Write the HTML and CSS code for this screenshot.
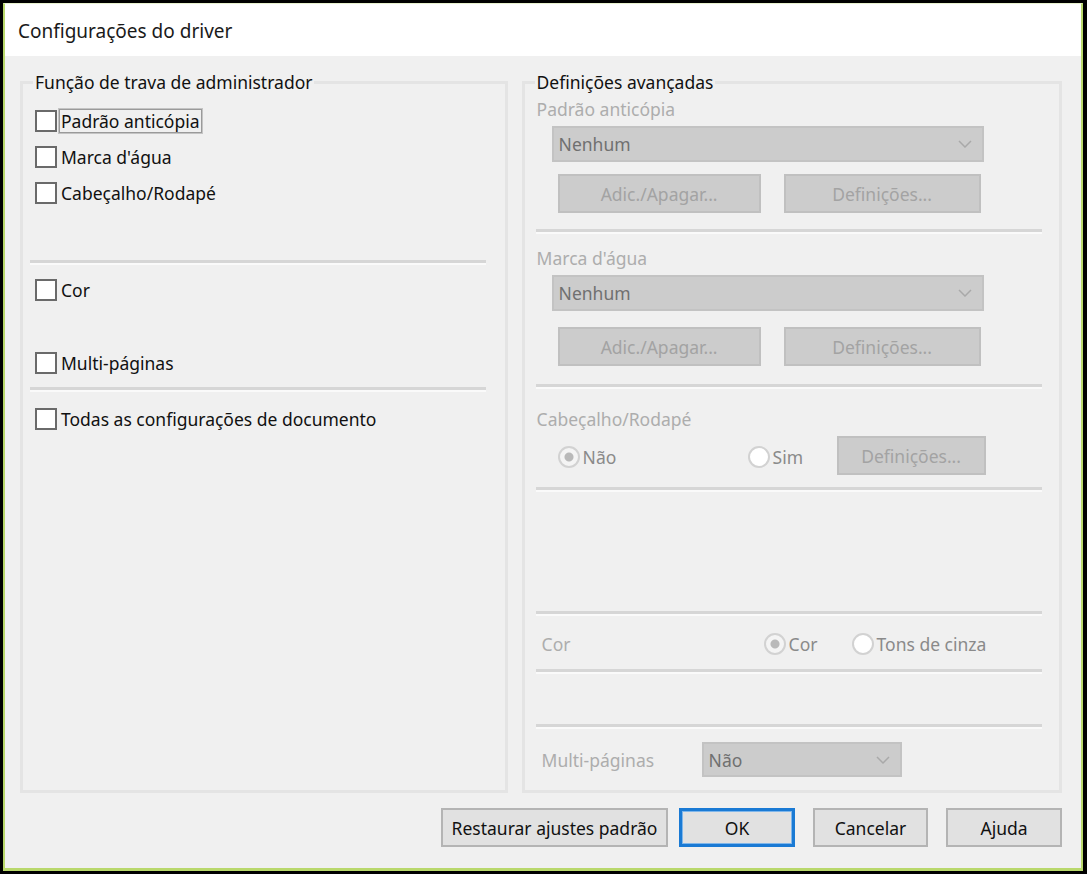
FILE: index.html
```html
<!DOCTYPE html>
<html lang="pt">
<head>
    <meta charset="UTF-8" />
    <title>Configurações do driver</title>
    <link rel="stylesheet" href="styles.css">
</head>
<body>
<div class="frame">
<div class="dialog">
    <div class="titlebar">Configurações do driver</div>

    <div class="dialog-body">
        <div class="groups">

            <!-- Left group: lock function -->
            <fieldset class="group group-lock">
                <legend>Função de trava de administrador</legend>

                <label class="check-row first"><input type="checkbox"><span class="focused">Padrão anticópia</span></label>
                <label class="check-row"><input type="checkbox"><span>Marca d'água</span></label>
                <label class="check-row"><input type="checkbox"><span>Cabeçalho/Rodapé</span></label>

                <div class="separator sep-1"></div>

                <label class="check-row row-cor"><input type="checkbox"><span>Cor</span></label>
                <label class="check-row row-multi"><input type="checkbox"><span>Multi-páginas</span></label>

                <div class="separator sep-2"></div>

                <label class="check-row row-all"><input type="checkbox"><span>Todas as configurações de documento</span></label>
            </fieldset>

            <!-- Right group: advanced settings (all disabled) -->
            <fieldset class="group group-advanced">
                <legend>Definições avançadas</legend>

                <div class="section-label label-a">Padrão anticópia</div>
                <div class="combo combo-wide combo-a">
                    <span>Nenhum</span>
                    <svg width="14" height="8" viewBox="0 0 14 8"><polyline points="1,1 7,7 13,1" fill="none" stroke="#a9a9a9" stroke-width="1.5"/></svg>
                </div>
                <div class="button-pair pair-a">
                    <button class="btn-disabled btn-add" disabled>Adic./Apagar...</button>
                    <button class="btn-disabled btn-settings" disabled>Definições...</button>
                </div>
                <div class="separator sep-a"></div>

                <div class="section-label label-b">Marca d'água</div>
                <div class="combo combo-wide combo-b">
                    <span>Nenhum</span>
                    <svg width="14" height="8" viewBox="0 0 14 8"><polyline points="1,1 7,7 13,1" fill="none" stroke="#a9a9a9" stroke-width="1.5"/></svg>
                </div>
                <div class="button-pair pair-b">
                    <button class="btn-disabled btn-add" disabled>Adic./Apagar...</button>
                    <button class="btn-disabled btn-settings" disabled>Definições...</button>
                </div>
                <div class="separator sep-b"></div>

                <div class="section-label label-c">Cabeçalho/Rodapé</div>
                <div class="radio-row row-header">
                    <label class="radio radio-nao"><input type="radio" name="header" checked disabled><span>Não</span></label>
                    <label class="radio radio-sim"><input type="radio" name="header" disabled><span>Sim</span></label>
                    <button class="btn-disabled btn-header" disabled>Definições...</button>
                </div>
                <div class="separator sep-c"></div>
                <div class="separator sep-d"></div>

                <div class="radio-row row-color">
                    <span class="inline-label">Cor</span>
                    <label class="radio radio-cor"><input type="radio" name="color" checked disabled><span>Cor</span></label>
                    <label class="radio radio-gray"><input type="radio" name="color" disabled><span>Tons de cinza</span></label>
                </div>
                <div class="separator sep-e"></div>
                <div class="separator sep-f"></div>

                <div class="radio-row row-pages">
                    <span class="inline-label">Multi-páginas</span>
                    <div class="combo combo-small">
                        <span>Não</span>
                        <svg width="14" height="8" viewBox="0 0 14 8"><polyline points="1,1 7,7 13,1" fill="none" stroke="#a9a9a9" stroke-width="1.5"/></svg>
                    </div>
                </div>
            </fieldset>
        </div>

        <div class="actions">
            <button class="btn btn-restore">Restaurar ajustes padrão</button>
            <button class="btn btn-ok">OK</button>
            <button class="btn btn-cancel">Cancelar</button>
            <button class="btn btn-help">Ajuda</button>
        </div>
    </div>
</div>
</div>
</body>
</html>
```

FILE: styles.css
```css
body {
    margin: 0;
    background-color: #000;
    font-family: 'Noto Sans', 'Open Sans', sans-serif;
    font-size: 17.5px;
    color: #111;
}

.frame {
    width: 1087px;
    height: 874px;
    box-sizing: border-box;
    padding: 3px 4px 3px 3px;
}

.dialog {
    height: 100%;
    box-sizing: border-box;
    border: 2px solid #b9d86c;
    border-top: 1px solid #e8f2cf;
    border-bottom-width: 3px;
    display: flex;
    flex-direction: column;
}

.titlebar {
    height: 52px;
    line-height: 54px;
    padding-left: 13px;
    background-color: #fff;
    color: #1a1a1a;
    font-size: 19px;
}

.dialog-body {
    flex: 1;
    background-color: #f0f0f0;
    padding: 15px 19px 0 15px;
}

.groups {
    display: flex;
    gap: 14px;
    height: 722px;
}

/* group boxes */
.group {
    box-sizing: border-box;
    margin: 0;
    min-width: 0;
    height: 100%;
    border: 3px solid #e4e4e4;
    padding: 0;
}

.group legend {
    line-height: 22px;
    padding: 0 2px;
    margin-left: 10px;
    color: #111;
}

.group-lock {
    width: 489px;
    padding-top: 10px;
}

.group-advanced {
    width: 542px;
}

/* checkbox rows */
.check-row {
    display: flex;
    align-items: center;
    height: 36px;
    padding-left: 12px;
}

.check-row input {
    appearance: none;
    margin: 0 2px 0 0;
    width: 22px;
    height: 22px;
    box-sizing: border-box;
    border: 2px solid #6a6a6a;
    background-color: #fff;
}

.check-row span {
    padding: 0 1px;
    line-height: 22px;
    border: 1px solid transparent;
}

.check-row span.focused {
    border: 1px solid #9a9a9a;
    outline: 1px solid #c4c4c4;
}

.sep-1 { margin: 49px 19px 0 7px; }
.row-cor { margin-top: 7px; }
.row-multi { margin-top: 37px; }
.sep-2 { margin: 6px 19px 0 7px; }
.row-all { margin-top: 9px; }

/* separators */
.separator {
    height: 3px;
    background-color: #d6d6d6;
    border-bottom: 2px solid #fafafa;
}

.group-advanced .separator {
    margin-left: 11px;
    margin-right: 17px;
}

/* disabled controls */
.section-label,
.inline-label {
    color: #adadad;
    line-height: 22px;
}

.section-label {
    margin-left: 12px;
}

.combo {
    box-sizing: border-box;
    height: 36px;
    background-color: #cccccc;
    border: 2px solid #c3c3c3;
    display: flex;
    align-items: center;
    justify-content: space-between;
    padding: 0 10px 0 5px;
    color: #707070;
}

.combo-wide {
    width: 432px;
    margin-left: 27px;
}

.button-pair {
    display: flex;
    gap: 23px;
    margin-left: 33px;
}

button {
    font-family: inherit;
    font-size: 17.5px;
    box-sizing: border-box;
    padding: 0;
}

.btn-disabled {
    height: 39px;
    background-color: #cccccc;
    border: 2px solid #c0c0c0;
    color: #a3a3a3;
}

.btn-add { width: 203px; }
.btn-settings { width: 197px; }
.btn-header { width: 149px; }

.label-a { margin-top: 5px; }
.combo-a { margin-top: 6px; }
.pair-a { margin-top: 12px; }
.sep-a { margin-top: 16px; }
.label-b { margin-top: 13px; }
.combo-b { margin-top: 6px; }
.pair-b { margin-top: 16px; }
.sep-b { margin-top: 18px; }
.label-c { margin-top: 19px; }
.row-header { margin-top: 6px; }
.sep-c { margin-top: 12px; }
.sep-d { margin-top: 119px; }
.row-color { margin-top: 16px; }
.sep-e { margin-top: 13px; }
.sep-f { margin-top: 50px; }
.row-pages { margin-top: 13px; }

/* radio rows */
.radio-row {
    display: flex;
    align-items: center;
}

.radio {
    display: flex;
    align-items: center;
    color: #8a8a8a;
}

.radio input {
    appearance: none;
    margin: 0 3px 0 0;
    width: 22px;
    height: 22px;
    box-sizing: border-box;
    border-radius: 50%;
    border: 2px solid #d2d2d2;
    background-color: #fff;
}

.radio input:checked {
    background: radial-gradient(circle, #b9b9b9 0 4px, #f4f4f4 5px);
}

.radio-nao { margin-left: 33px; width: 190px; margin-top: 3px; }
.radio-sim { width: 89px; margin-top: 3px; }

.inline-label {
    margin-left: 17px;
}

.row-color .inline-label { width: 222px; }
.radio-cor { width: 88px; }

.row-pages .inline-label { width: 160px; }

.combo-small {
    width: 200px;
    height: 35px;
}

/* bottom buttons */
.actions {
    display: flex;
    justify-content: flex-end;
    margin-top: 15px;
}

.btn {
    height: 39px;
    background-color: #e1e1e1;
    border: 2px solid #b4b4b4;
    color: #111;
    margin-left: 18px;
}

.btn-restore { width: 227px; }
.btn-ok {
    width: 116px;
    margin-left: 11px;
    border: 3px solid #1a7ad4;
    box-shadow: inset 0 0 0 1px #7fb6ea;
}
.btn-cancel { width: 115px; }
.btn-help { width: 116px; }
```
